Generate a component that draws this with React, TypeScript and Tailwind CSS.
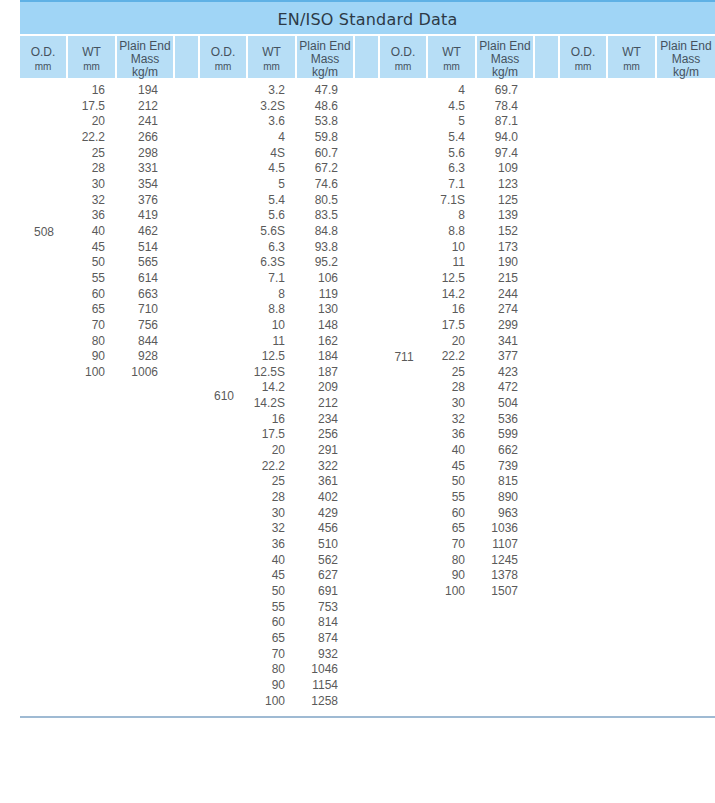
import React from 'react';

type Row = [string, string];

interface Group {
  od: string;
  span: number;
  rows: Row[];
}

const ROW_H = 15.67;

const groups: Group[] = [
  {
    od: '508',
    span: 19,
    rows: [
      ['16', '194'], ['17.5', '212'], ['20', '241'], ['22.2', '266'], ['25', '298'],
      ['28', '331'], ['30', '354'], ['32', '376'], ['36', '419'], ['40', '462'],
      ['45', '514'], ['50', '565'], ['55', '614'], ['60', '663'], ['65', '710'],
      ['70', '756'], ['80', '844'], ['90', '928'], ['100', '1006'],
    ],
  },
  {
    od: '610',
    span: 40,
    rows: [
      ['3.2', '47.9'], ['3.2S', '48.6'], ['3.6', '53.8'], ['4', '59.8'], ['4S', '60.7'],
      ['4.5', '67.2'], ['5', '74.6'], ['5.4', '80.5'], ['5.6', '83.5'], ['5.6S', '84.8'],
      ['6.3', '93.8'], ['6.3S', '95.2'], ['7.1', '106'], ['8', '119'], ['8.8', '130'],
      ['10', '148'], ['11', '162'], ['12.5', '184'], ['12.5S', '187'], ['14.2', '209'],
      ['14.2S', '212'], ['16', '234'], ['17.5', '256'], ['20', '291'], ['22.2', '322'],
      ['25', '361'], ['28', '402'], ['30', '429'], ['32', '456'], ['36', '510'],
      ['40', '562'], ['45', '627'], ['50', '691'], ['55', '753'], ['60', '814'],
      ['65', '874'], ['70', '932'], ['80', '1046'], ['90', '1154'], ['100', '1258'],
    ],
  },
  {
    od: '711',
    span: 35,
    rows: [
      ['4', '69.7'], ['4.5', '78.4'], ['5', '87.1'], ['5.4', '94.0'], ['5.6', '97.4'],
      ['6.3', '109'], ['7.1', '123'], ['7.1S', '125'], ['8', '139'], ['8.8', '152'],
      ['10', '173'], ['11', '190'], ['12.5', '215'], ['14.2', '244'], ['16', '274'],
      ['17.5', '299'], ['20', '341'], ['22.2', '377'], ['25', '423'], ['28', '472'],
      ['30', '504'], ['32', '536'], ['36', '599'], ['40', '662'], ['45', '739'],
      ['50', '815'], ['55', '890'], ['60', '963'], ['65', '1036'], ['70', '1107'],
      ['80', '1245'], ['90', '1378'], ['100', '1507'],
    ],
  },
];

const HeaderGroup: React.FC<{ last?: boolean }> = ({ last }) => (
  <>
    <div className="w-[48px] shrink-0 border-r-2 border-white flex flex-col items-center justify-center pt-[4px]">
      <span className="text-[12px] leading-[16px]">O.D.</span>
      <span className="text-[10px] leading-[14px]">mm</span>
    </div>
    <div className="w-[49px] shrink-0 border-r-2 border-white flex flex-col items-center justify-center pt-[4px]">
      <span className="text-[12px] leading-[16px]">WT</span>
      <span className="text-[10px] leading-[14px]">mm</span>
    </div>
    <div className={`w-[58px] shrink-0 flex flex-col items-center justify-center pt-[4px] text-[12px] leading-[13px] ${last ? '' : 'border-r-2 border-white'}`}>
      <span>Plain End</span>
      <span>Mass</span>
      <span>kg/m</span>
    </div>
    {!last && <div className="w-[25px] shrink-0 border-r-2 border-white" />}
  </>
);

const DataGroup: React.FC<{ group?: Group; last?: boolean }> = ({ group, last }) => (
  <div className="flex items-start">
    <div
      className="w-[48px] shrink-0 flex items-center justify-center text-[12px]"
      style={{ height: group ? group.span * ROW_H : 0 }}
    >
      {group?.od}
    </div>
    <div className="w-[49px] shrink-0 flex flex-col items-end pr-[12px] text-[12px]">
      {group?.rows.map(([wt], i) => (
        <div key={i} className="h-[15.67px] leading-[15.67px]">{wt}</div>
      ))}
    </div>
    <div className="w-[58px] shrink-0 flex flex-col items-end pr-[17px] text-[12px]">
      {group?.rows.map(([, mass], i) => (
        <div key={i} className="h-[15.67px] leading-[15.67px]">{mass}</div>
      ))}
    </div>
    {!last && <div className="w-[25px] shrink-0" />}
  </div>
);

export default function App() {
  return (
    <div className="w-[715px] h-[803px] bg-white pl-[20px] font-['Liberation_Sans',Arial,sans-serif]">
      <div className="w-[695px]">
        <div className="h-[2px] bg-[#5fb1e5]" />
        <div className="h-[32px] bg-[#a0d5f6] flex items-center justify-center pt-[3px] text-[16px] text-[#2d3a46] font-['DejaVu_Sans',Verdana,sans-serif] tracking-[0.2px]">
          EN/ISO Standard Data
        </div>
        <div className="h-[2px] bg-white" />
        <div className="h-[42px] bg-[#b7def6] flex text-[#45525e]">
          <HeaderGroup />
          <HeaderGroup />
          <HeaderGroup />
          <HeaderGroup last />
        </div>
        <div className="flex pt-[5px] text-[#5a5a5a]">
          <DataGroup group={groups[0]} />
          <DataGroup group={groups[1]} />
          <DataGroup group={groups[2]} />
          <DataGroup last />
        </div>
        <div className="h-[6px]" />
        <div className="h-[2px] bg-[#9fbad3]" />
      </div>
    </div>
  );
}
